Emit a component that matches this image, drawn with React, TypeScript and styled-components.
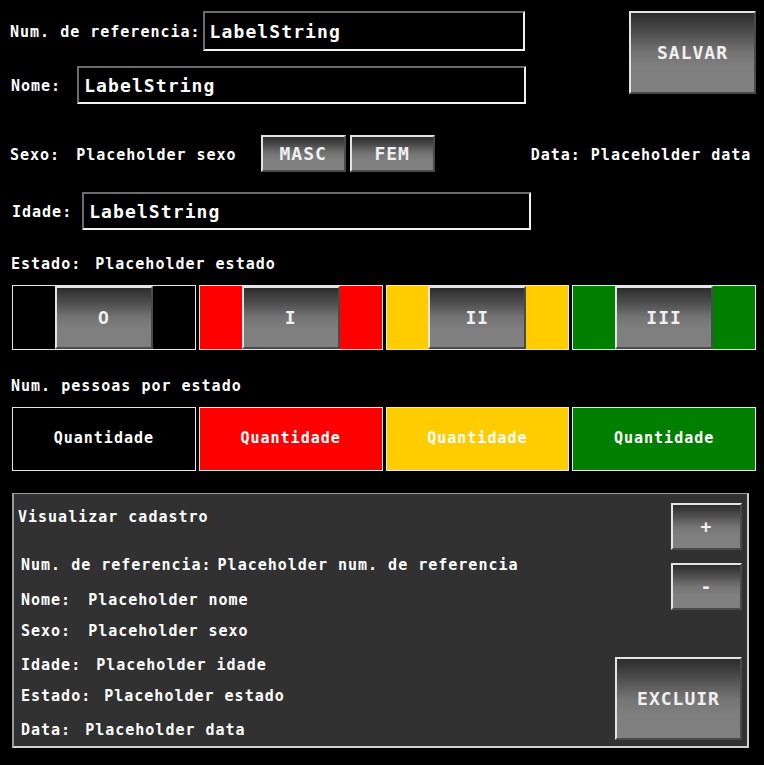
import styled, { createGlobalStyle } from 'styled-components';

const GlobalStyle = createGlobalStyle`
  html, body {
    margin: 0;
    padding: 0;
    background: #000;
  }
  body {
    font-family: 'DejaVu Sans Mono', 'Liberation Mono', monospace;
    color: #fff;
  }
`;

const Tela = styled.div`
  width: 764px;
  height: 765px;
  box-sizing: border-box;
  padding: 11px 8px 0 10px;
  background: #000;
  display: flex;
  flex-direction: column;
  overflow: hidden;
`;

const Cabecalho = styled.div`
  display: flex;
  justify-content: space-between;
  align-items: flex-start;
`;

const Campos = styled.div`
  display: flex;
  flex-direction: column;
  gap: 15px;
`;

const Linha = styled.div<{ $topo?: number; $esq?: number }>`
  display: flex;
  align-items: center;
  margin-top: ${(p) => p.$topo ?? 0}px;
  margin-left: ${(p) => p.$esq ?? 0}px;
`;

const Rotulo = styled.span<{ $gap?: number; $esq?: number }>`
  font-size: 15px;
  font-weight: bold;
  letter-spacing: 1px;
  line-height: 16px;
  padding-top: 2px;
  white-space: nowrap;
  margin-right: ${(p) => p.$gap ?? 0}px;
  margin-left: ${(p) => p.$esq ?? 0}px;
`;

const Campo = styled.div<{ $largura: number; $altura: number }>`
  width: ${(p) => p.$largura}px;
  height: ${(p) => p.$altura}px;
  box-sizing: border-box;
  background: #000;
  border-style: solid;
  border-width: 2px;
  border-color: #6c6c6c #f2f2f2 #f2f2f2 #6c6c6c;
  padding-left: 5px;
  display: flex;
  align-items: center;
  font-size: 18px;
  font-weight: bold;
  letter-spacing: 1.1px;
`;

const Botao = styled.button<{ $largura: number; $altura: number; $esq?: number }>`
  width: ${(p) => p.$largura}px;
  height: ${(p) => p.$altura}px;
  margin-left: ${(p) => p.$esq ?? 0}px;
  box-sizing: border-box;
  padding: 0;
  border-style: solid;
  border-width: 2px;
  border-color: #e4e4e4 #4a4a4a #4a4a4a #e4e4e4;
  background: linear-gradient(to bottom, #2c2c2c 0%, #4e4e4e 25%, #747474 50%, #7f7f7f 70%, #808080 100%);
  color: #f0f0f0;
  font-family: 'DejaVu Sans Mono', 'Liberation Mono', monospace;
  font-size: 18px;
  font-weight: bold;
  letter-spacing: 1px;
  display: flex;
  align-items: center;
  justify-content: center;
  flex-shrink: 0;
`;

const Grade = styled.div<{ $topo: number }>`
  margin-top: ${(p) => p.$topo}px;
  margin-left: 2px;
  width: 744px;
  display: grid;
  grid-template-columns: repeat(4, 1fr);
  gap: 3px;
`;

const CelulaEstado = styled.div<{ $cor: string }>`
  height: 65px;
  box-sizing: border-box;
  border: 1px solid #e6e6e6;
  background: ${(p) => p.$cor};
  display: flex;
  justify-content: center;
  align-items: stretch;
`;

const CelulaQtd = styled.div<{ $cor: string }>`
  height: 64px;
  box-sizing: border-box;
  border: 1px solid #e6e6e6;
  background: ${(p) => p.$cor};
  display: flex;
  justify-content: center;
  align-items: center;
  padding-bottom: 3px;
  font-size: 15px;
  font-weight: bold;
  letter-spacing: 1px;
  color: #fff;
`;

const Painel = styled.div`
  margin-top: 22px;
  margin-left: 2px;
  width: 737px;
  height: 255px;
  box-sizing: border-box;
  background: #313131;
  border-style: solid;
  border-width: 1px 2px 2px 2px;
  border-color: #9a9a9a #d2d2d2 #d2d2d2 #9a9a9a;
  display: flex;
  justify-content: space-between;
`;

const Info = styled.div`
  display: flex;
  flex-direction: column;
  padding: 13px 0 0 4px;
`;

const Acoes = styled.div`
  display: flex;
  flex-direction: column;
  align-items: flex-end;
  gap: 13px;
  padding: 9px 5px 6px 0;
`;

const Excluir = styled(Botao)`
  margin-top: auto;
`;

const estados = [
  { cor: '#000000', nome: 'O' },
  { cor: '#ff0000', nome: 'I' },
  { cor: '#ffcc00', nome: 'II' },
  { cor: '#007f00', nome: 'III' },
];

const cadastro = [
  { rotulo: 'Num. de referencia:', valor: 'Placeholder num. de referencia', gap: 6, topo: 30 },
  { rotulo: 'Nome:', valor: 'Placeholder nome', gap: 17, topo: 17 },
  { rotulo: 'Sexo:', valor: 'Placeholder sexo', gap: 17, topo: 13 },
  { rotulo: 'Idade:', valor: 'Placeholder idade', gap: 15, topo: 16 },
  { rotulo: 'Estado:', valor: 'Placeholder estado', gap: 13, topo: 13 },
  { rotulo: 'Data:', valor: 'Placeholder data', gap: 14, topo: 16 },
];

const App = () => {
  return (
    <>
      <GlobalStyle />
      <Tela>
        <Cabecalho>
          <Campos>
            <Linha>
              <Rotulo $gap={2}>Num. de referencia:</Rotulo>
              <Campo $largura={322} $altura={40}>LabelString</Campo>
            </Linha>
            <Linha $esq={1}>
              <Rotulo $gap={16}>Nome:</Rotulo>
              <Campo $largura={449} $altura={38}>LabelString</Campo>
            </Linha>
          </Campos>
          <Botao $largura={127} $altura={83}>SALVAR</Botao>
        </Cabecalho>

        <Linha $topo={31}>
          <Rotulo $gap={16}>Sexo:</Rotulo>
          <Rotulo>Placeholder sexo</Rotulo>
          <Botao $largura={85} $altura={37} $esq={24}>MASC</Botao>
          <Botao $largura={85} $altura={37} $esq={4}>FEM</Botao>
          <Rotulo $esq={96}>Data: Placeholder data</Rotulo>
        </Linha>

        <Linha $topo={20} $esq={2}>
          <Rotulo $gap={10}>Idade:</Rotulo>
          <Campo $largura={449} $altura={38}>LabelString</Campo>
        </Linha>

        <Linha $topo={24} $esq={1}>
          <Rotulo $gap={14}>Estado:</Rotulo>
          <Rotulo>Placeholder estado</Rotulo>
        </Linha>

        <Grade $topo={13}>
          {estados.map((e) => (
            <CelulaEstado key={e.nome} $cor={e.cor}>
              <Botao $largura={98} $altura={63}>{e.nome}</Botao>
            </CelulaEstado>
          ))}
        </Grade>

        <Linha $topo={26} $esq={1}>
          <Rotulo>Num. pessoas por estado</Rotulo>
        </Linha>

        <Grade $topo={13}>
          {estados.map((e) => (
            <CelulaQtd key={e.nome} $cor={e.cor}>Quantidade</CelulaQtd>
          ))}
        </Grade>

        <Painel>
          <Info>
            <Rotulo>Visualizar cadastro</Rotulo>
            {cadastro.map((c) => (
              <Linha key={c.rotulo} $topo={c.topo} $esq={3}>
                <Rotulo $gap={c.gap}>{c.rotulo}</Rotulo>
                <Rotulo>{c.valor}</Rotulo>
              </Linha>
            ))}
          </Info>
          <Acoes>
            <Botao $largura={71} $altura={47}>+</Botao>
            <Botao $largura={71} $altura={47}>-</Botao>
            <Excluir $largura={127} $altura={83}>EXCLUIR</Excluir>
          </Acoes>
        </Painel>
      </Tela>
    </>
  );
};

export default App;
